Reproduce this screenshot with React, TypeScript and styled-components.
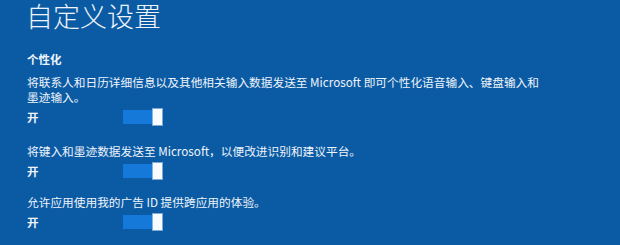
import styled, { createGlobalStyle } from 'styled-components';

const GlobalStyle = createGlobalStyle`
  html, body { margin: 0; padding: 0; }
  body {
    background: #0b5ba4;
    font-family: "Noto Sans CJK SC", "Noto Sans", sans-serif;
  }
`;

const Page = styled.div`
  width: 620px;
  height: 245px;
  overflow: hidden;
  background: #0b5ba4;
  color: #eef4fa;
  padding: 0 0 0 26px;
  box-sizing: border-box;
`;

const Title = styled.h1`
  margin: 0;
  font-size: 27px;
  line-height: 32px;
  font-weight: 300;
`;

const GroupTitle = styled.h2`
  margin: 20px 0 0 1px;
  font-size: 11.5px;
  line-height: 14px;
  font-weight: 700;
`;

const Setting = styled.section<{ $gap: number }>`
  margin-top: ${(p) => p.$gap}px;
  display: flex;
  flex-direction: column;
`;

const Desc = styled.p`
  margin: 0 0 0 1px;
  width: 522px;
  font-size: 11.7px;
  line-height: 15px;
`;

const SwitchRow = styled.div`
  display: flex;
  align-items: center;
  margin-top: 4px;
  height: 18px;
`;

const State = styled.span`
  width: 96px;
  padding-left: 1px;
  font-size: 11.5px;
  font-weight: 700;
`;

const Track = styled.div`
  position: relative;
  width: 39px;
  height: 14px;
  background: #1479d8;
`;

const Thumb = styled.div`
  position: absolute;
  right: 0;
  top: -1px;
  width: 9px;
  height: 16px;
  background: #f8fbff;
  box-shadow: 0 0 0 1px rgba(200, 225, 250, 0.6);
`;

function Toggle() {
  return (
    <Track>
      <Thumb />
    </Track>
  );
}

const settings = [
  {
    text: '将联系人和日历详细信息以及其他相关输入数据发送至 Microsoft 即可个性化语音输入、键盘输入和墨迹输入。',
    gap: 8,
  },
  {
    text: '将键入和墨迹数据发送至 Microsoft，以便改进识别和建议平台。',
    gap: 17,
  },
  {
    text: '允许应用使用我的广告 ID 提供跨应用的体验。',
    gap: 14,
  },
];

export default function App() {
  return (
    <Page>
      <GlobalStyle />
      <Title>自定义设置</Title>
      <GroupTitle>个性化</GroupTitle>
      {settings.map((s) => (
        <Setting key={s.text} $gap={s.gap}>
          <Desc>{s.text}</Desc>
          <SwitchRow>
            <State>开</State>
            <Toggle />
          </SwitchRow>
        </Setting>
      ))}
    </Page>
  );
}
